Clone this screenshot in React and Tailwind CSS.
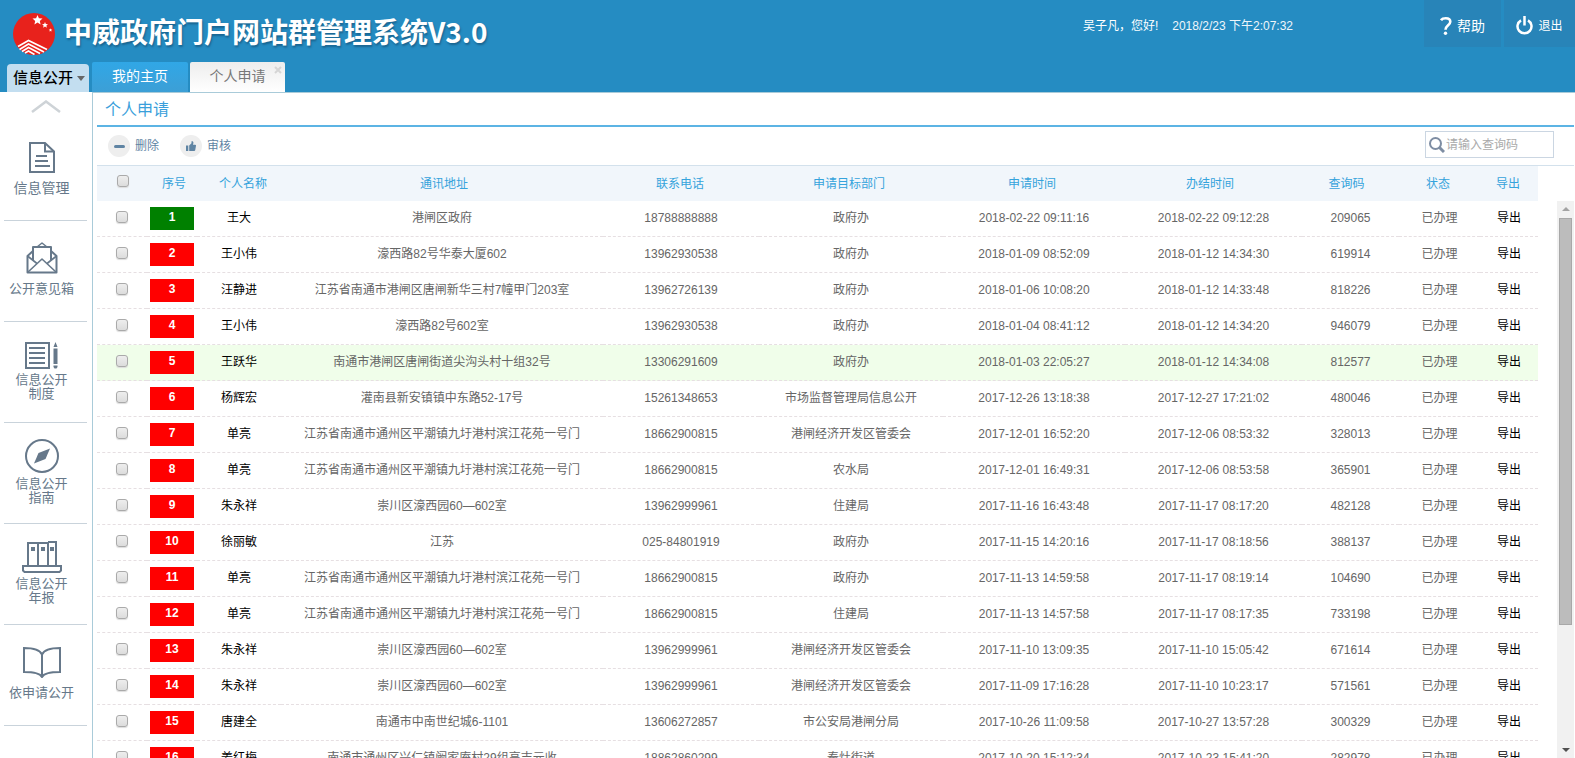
import { useState } from 'react';

const rows = [
  { id: 1, name: '王大', address: '港闸区政府', phone: '18788888888', dept: '政府办', applied: '2018-02-22 09:11:16', finished: '2018-02-22 09:12:28', code: '209065', isNew: true },
  { id: 2, name: '王小伟', address: '濠西路82号华泰大厦602', phone: '13962930538', dept: '政府办', applied: '2018-01-09 08:52:09', finished: '2018-01-12 14:34:30', code: '619914' },
  { id: 3, name: '汪静进', address: '江苏省南通市港闸区唐闸新华三村7幢甲门203室', phone: '13962726139', dept: '政府办', applied: '2018-01-06 10:08:20', finished: '2018-01-12 14:33:48', code: '818226' },
  { id: 4, name: '王小伟', address: '濠西路82号602室', phone: '13962930538', dept: '政府办', applied: '2018-01-04 08:41:12', finished: '2018-01-12 14:34:20', code: '946079' },
  { id: 5, name: '王跃华', address: '南通市港闸区唐闸街道尖沟头村十组32号', phone: '13306291609', dept: '政府办', applied: '2018-01-03 22:05:27', finished: '2018-01-12 14:34:08', code: '812577' },
  { id: 6, name: '杨辉宏', address: '灌南县新安镇镇中东路52-17号', phone: '15261348653', dept: '市场监督管理局信息公开', applied: '2017-12-26 13:18:38', finished: '2017-12-27 17:21:02', code: '480046' },
  { id: 7, name: '单亮', address: '江苏省南通市通州区平潮镇九圩港村滨江花苑一号门', phone: '18662900815', dept: '港闸经济开发区管委会', applied: '2017-12-01 16:52:20', finished: '2017-12-06 08:53:32', code: '328013' },
  { id: 8, name: '单亮', address: '江苏省南通市通州区平潮镇九圩港村滨江花苑一号门', phone: '18662900815', dept: '农水局', applied: '2017-12-01 16:49:31', finished: '2017-12-06 08:53:58', code: '365901' },
  { id: 9, name: '朱永祥', address: '崇川区濠西园60—602室', phone: '13962999961', dept: '住建局', applied: '2017-11-16 16:43:48', finished: '2017-11-17 08:17:20', code: '482128' },
  { id: 10, name: '徐丽敏', address: '江苏', phone: '025-84801919', dept: '政府办', applied: '2017-11-15 14:20:16', finished: '2017-11-17 08:18:56', code: '388137' },
  { id: 11, name: '单亮', address: '江苏省南通市通州区平潮镇九圩港村滨江花苑一号门', phone: '18662900815', dept: '政府办', applied: '2017-11-13 14:59:58', finished: '2017-11-17 08:19:14', code: '104690' },
  { id: 12, name: '单亮', address: '江苏省南通市通州区平潮镇九圩港村滨江花苑一号门', phone: '18662900815', dept: '住建局', applied: '2017-11-13 14:57:58', finished: '2017-11-17 08:17:35', code: '733198' },
  { id: 13, name: '朱永祥', address: '崇川区濠西园60—602室', phone: '13962999961', dept: '港闸经济开发区管委会', applied: '2017-11-10 13:09:35', finished: '2017-11-10 15:05:42', code: '671614' },
  { id: 14, name: '朱永祥', address: '崇川区濠西园60—602室', phone: '13962999961', dept: '港闸经济开发区管委会', applied: '2017-11-09 17:16:28', finished: '2017-11-10 10:23:17', code: '571561' },
  { id: 15, name: '唐建全', address: '南通市中南世纪城6-1101', phone: '13606272857', dept: '市公安局港闸分局', applied: '2017-10-26 11:09:58', finished: '2017-10-27 13:57:28', code: '300329' },
  { id: 16, name: '姜红梅', address: '南通市通州区兴仁镇阚家庵村29组高吉元收', phone: '18862860299', dept: '秦灶街道', applied: '2017-10-20 15:12:34', finished: '2017-10-23 15:41:20', code: '282978' },
];

const headCols = ['w-[52px]', 'w-[50px]', 'w-[88px]', '', 'w-[158px]', 'w-[180px]', 'w-[186px]', 'w-[170px]', 'w-[103px]', 'w-[80px]', 'w-[60px]'];
const bodyCols = ['w-[50px]', 'w-[50px]', 'w-[84px]', '', 'w-[156px]', 'w-[184px]', 'w-[182px]', 'w-[177px]', 'w-[97px]', 'w-[81px]', 'w-[58px]'];
const headings = ['序号', '个人名称', '通讯地址', '联系电话', '申请目标部门', '申请时间', '办结时间', '查询码', '状态', '导出'];

const menu = [
  { lines: ['信息管理'], size: 'text-sm', Icon: DocIcon },
  { lines: ['公开意见箱'], size: 'text-[13px]', Icon: MailIcon },
  { lines: ['信息公开', '制度'], size: 'text-[13px]', Icon: RulesIcon },
  { lines: ['信息公开', '指南'], size: 'text-[13px]', Icon: CompassIcon },
  { lines: ['信息公开', '年报'], size: 'text-[13px]', Icon: BindersIcon },
  { lines: ['依申请公开'], size: 'text-[13px]', Icon: BookIcon },
];

function DocIcon() {
  return (
    <svg width="26" height="31" viewBox="0 0 26 31" fill="none" stroke="currentColor" strokeWidth="2">
      <path d="M1 1h15l9 8.500V30H1z" />
      <path d="M16 1v8.500h9M7 14h11M6 19h13M6 24h15" />
    </svg>
  );
}

function MailIcon() {
  return (
    <svg width="32" height="32" viewBox="0 0 32 32" fill="none" stroke="currentColor" strokeWidth="2" strokeLinejoin="round">
      <path d="M7 9L1.500 14v16.500h29V14L25 9" />
      <path d="M11 5l5-4 5 4" strokeWidth="1.500" />
      <path d="M7 18V5h18v13" />
      <path d="M1.500 14l9.500 7.500M30.500 14L21 21.500M2 30l14-13 14 13" strokeWidth="1.600" />
    </svg>
  );
}

function RulesIcon() {
  return (
    <svg width="33" height="27" viewBox="0 0 33 27" fill="none" stroke="currentColor" strokeWidth="2">
      <path d="M1 1h23v25H1z" />
      <path d="M4 6h16M4 11h16M4 16h16M4 21h16" />
      <path d="M30.500 0l2 5h-4zM28.500 6.500h4V22h-4zM28.500 23.500h4V25l-1 1.500h-2l-1-1.500z" fill="currentColor" stroke="none" />
    </svg>
  );
}

function CompassIcon() {
  return (
    <svg width="34" height="34" viewBox="0 0 34 34" fill="none" stroke="currentColor" strokeWidth="2">
      <circle cx="17" cy="17" r="16" />
      <path d="M25 9.500L20.500 20 9 24.500 13.500 14z" fill="currentColor" stroke="none" />
    </svg>
  );
}

function BindersIcon() {
  return (
    <svg width="40" height="32" viewBox="0 0 40 32" fill="none" stroke="currentColor" strokeWidth="2">
      <path d="M6 25V2h10v23M16 2h10v23M26 1h8v24M1 25h38v4.500L37.500 31h-35L1 29.500z" />
      <path d="M9 6h4v4H9zM19 6h4v4h-4zM28 6h4v4h-4z" fill="currentColor" stroke="none" />
    </svg>
  );
}

function BookIcon() {
  return (
    <svg width="38" height="31" viewBox="0 0 38 31" fill="none" stroke="currentColor" strokeWidth="2">
      <path d="M19 7.500C17 3 10 1 1 1v24c9 0 16 1 18 5 2-4 9-5 18-5V1c-9 0-16 2-18 6.500z" />
      <path d="M19 7v23" />
    </svg>
  );
}

function Logo() {
  const star = 'M0-5l1.400 3.300 3.600.300-2.700 2.400.800 3.500L0 2.600-3.100 4.500l.800-3.500L-5-1.400l3.600-.300z';
  return (
    <svg width="42" height="42" viewBox="0 0 42 42">
      <circle cx="21" cy="21" r="21" fill="#e8221c" />
      <g fill="#fff">
        <path d={star} transform="translate(24.500 7)" />
        <path d={star} transform="translate(32 12) scale(.6)" />
        <path d={star} transform="translate(37.500 17) scale(.35)" />
      </g>
      <g fill="none" stroke="#fff" strokeWidth="1.700">
        <path d="M5 33.500L15.500 27.500l18.500 9" />
        <path d="M6.500 36.500L15.500 31l15.500 8" />
        <path d="M9 38.500L15.500 34.500l11.500 6" />
        <path d="M12 40l3.500-2 6 3.500" />
      </g>
    </svg>
  );
}

function Checkbox({ label, checked, onChange }) {
  return (
    <input
      type="checkbox"
      aria-label={label}
      checked={checked}
      onChange={onChange}
      className="mx-auto block size-3 appearance-none rounded-[3px] border border-[#aaa] bg-linear-to-b from-[#eee] to-[#dcdcdc] shadow-[0_1px_1px_#ddd] checked:bg-sky-500"
    />
  );
}

function Cols({ widths }) {
  return (
    <colgroup>
      {widths.map((width, index) => (
        <col key={index} className={width} />
      ))}
    </colgroup>
  );
}

function Header({ tab, setTab }) {
  return (
    <header className="flex h-[92px] shrink-0 flex-col justify-between bg-[#258cc2] text-white">
      <div className="flex items-start justify-between">
        <div className="flex items-start gap-[9px] pt-[13px] pl-[13px]">
          <Logo />
          <h1 className="font-['Noto_Sans_CJK_SC',sans-serif] text-[28px] leading-9 font-bold whitespace-nowrap [text-shadow:1px_2px_2px_#1a6591]">
            中威政府门户网站群管理系统V3.0
          </h1>
        </div>
        <div className="flex items-start text-xs">
          <p className="flex gap-[14px] pt-[18px] pr-[131px] leading-4">
            <span>吴子凡，您好!</span>
            <span className="text-[#eef6fb]">2018/2/23 下午2:07:32</span>
          </p>
          <button type="button" className="mr-[3px] flex h-[47px] w-[77px] items-center justify-center gap-[5px] bg-[#2884b8] pt-1 text-sm">
            <svg width="12" height="18" viewBox="0 0 12 18" fill="none" stroke="#fff" strokeWidth="2.600">
              <path d="M1 3.200C2 1.800 3.800 1.300 5.800 1.300c2.700 0 4.500 1.300 4.500 3.500 0 3.400-4.800 3.700-4.800 8" />
              <circle cx="5.500" cy="16.200" r="1.700" fill="#fff" stroke="none" />
            </svg>
            帮助
          </button>
          <button type="button" className="flex h-[47px] w-[71px] items-center justify-center gap-[5px] bg-[#2884b8] pt-1 text-xs">
            <svg width="17" height="19" viewBox="0 0 17 19" fill="none" stroke="#fff" strokeWidth="2.500">
              <path d="M5 4.300a7 7 0 1 0 7 0M8.500 0v9.500" />
            </svg>
            退出
          </button>
        </div>
      </div>

      <nav className="flex items-end pl-[7px]">
        <button type="button" className="flex h-7 w-[82px] items-center gap-1 rounded-t-sm bg-[#c3def0] pl-[6px] text-[15px] font-medium text-black">
          信息公开
          <span className="border-x-4 border-t-[5px] border-x-transparent border-t-[#666]" />
        </button>
        <button
          type="button"
          onClick={() => setTab('home')}
          className="ml-[3px] h-[30px] w-24 rounded-t-xs bg-linear-to-b from-[#30a7e6] to-[#3c9fd6] pb-0.5 text-sm"
        >
          我的主页
        </button>
        <div className="relative ml-0.5">
          <button
            type="button"
            aria-current={tab === 'apply' ? 'page' : undefined}
            onClick={() => setTab('apply')}
            className="block h-[30px] w-[95px] rounded-t-xs bg-linear-to-b from-[#ededed] to-white pb-0.5 text-sm text-[#777]"
          >
            个人申请
          </button>
          <button type="button" aria-label="关闭标签" className="absolute top-1 right-[3px] text-[#d5d5d5]">
            <svg width="8" height="8" viewBox="0 0 8 8" stroke="currentColor" strokeWidth="2">
              <path d="M1 1l6 6M7 1L1 7" />
            </svg>
          </button>
        </div>
      </nav>
    </header>
  );
}

function Sidebar() {
  return (
    <aside className="w-[92px] shrink-0 pr-[5px] pl-1 text-[#66788a]">
      <button type="button" aria-label="向上滚动" className="flex h-7 w-full items-start justify-center pt-2 text-[#ced3d7]">
        <svg width="30" height="13" viewBox="0 0 30 13" fill="none" stroke="currentColor" strokeWidth="2.500">
          <path d="M1 12L15 1.500 29 12" />
        </svg>
      </button>
      {menu.map(({ lines, size, Icon }) => (
        <a
          key={lines.join('')}
          href="#"
          className={`flex h-[101px] flex-col items-center justify-center border-b border-[#c9d3db] pr-2 ${lines.length > 1 ? 'gap-1 pb-0.5' : 'gap-2 pb-1'} ${size} leading-[14px]`}
        >
          <Icon />
          <span className="text-center whitespace-nowrap">
            {lines.map((line) => (
              <span key={line} className="block">{line}</span>
            ))}
          </span>
        </a>
      ))}
    </aside>
  );
}

export default function App() {
  const [tab, setTab] = useState('apply');
  const [query, setQuery] = useState('');
  const [selected, setSelected] = useState([]);

  const toggle = (id) => setSelected((ids) => (ids.includes(id) ? ids.filter((item) => item !== id) : [...ids, id]));

  return (
    <div className="flex h-screen flex-col overflow-hidden bg-white font-['Liberation_Sans','Noto_Sans_CJK_SC',sans-serif] text-xs text-[#666]">
      <Header tab={tab} setTab={setTab} />
      <div className="flex min-h-0 flex-1">
        <Sidebar />
        <main className="flex min-w-0 flex-1 flex-col border-t border-l border-[#a9cbd9] pr-px pl-1">
          <h2 className="h-[34px] shrink-0 border-b-2 border-[#5cb4e4] pl-2 text-base leading-[34px] text-[#3a9fdb]">个人申请</h2>

          <div className="flex h-[39px] shrink-0 items-center justify-between border-b border-[#d3e1ec] pr-5 pl-[11px] text-[#5f84a3]">
            <div className="flex gap-[21px]">
              <button type="button" className="flex items-center gap-[5px]">
                <span className="flex size-[22px] items-center justify-center rounded-full bg-[#eee]">
                  <span className="h-[3px] w-[11px] rounded-xs bg-[#5f84a3]" />
                </span>
                删除
              </button>
              <button type="button" className="flex items-center gap-[5px]">
                <span className="flex size-[22px] items-center justify-center rounded-full bg-[#eee]">
                  <svg width="10" height="10" viewBox="0 0 10 10" fill="currentColor">
                    <path d="M0 4.500h2.300V10H0zM3.200 4.500L5.500 2.300V.300C6.800-.200 7.600.800 7.400 2L7 3.700h2.200c.600 0 .900.500.800 1L9.200 9.200c-.100.500-.500.800-1 .800H3.200z" />
                  </svg>
                </span>
                审核
              </button>
            </div>
            <label className="mb-[3px] flex h-[27px] w-[129px] items-center gap-px border border-[#cbd6e2] pl-[3px]">
              <svg width="16" height="16" viewBox="0 0 16 16" fill="none" stroke="#7e8da3" aria-hidden="true">
                <circle cx="6.500" cy="6.500" r="5.500" strokeWidth="2" />
                <path d="M10.500 10.500L15 15" strokeWidth="3" />
              </svg>
              <input
                type="text"
                aria-label="查询码"
                value={query}
                onChange={(event) => setQuery(event.target.value)}
                placeholder="请输入查询码"
                className="min-w-0 flex-1 text-xs outline-none placeholder:text-[#aaa]"
              />
            </label>
          </div>

          <div className="shrink-0 pr-9">
            <table className="w-full table-fixed bg-[#f1f6fb] text-center text-[#35a3dc]">
              <Cols widths={headCols} />
              <thead>
                <tr className="h-[35px]">
                  <th className="pb-1.5">
                    <Checkbox
                      label="全选"
                      checked={selected.length === rows.length}
                      onChange={(event) => setSelected(event.target.checked ? rows.map((row) => row.id) : [])}
                    />
                  </th>
                  {headings.map((heading) => (
                    <th key={heading} className="font-normal">{heading}</th>
                  ))}
                </tr>
              </thead>
            </table>
          </div>

          <div className="flex min-h-0 flex-1">
            <div className="min-w-0 flex-1 overflow-hidden pr-[19px]">
              <table className="w-full table-fixed border-separate border-spacing-0 text-center whitespace-nowrap">
                <Cols widths={bodyCols} />
                <tbody>
                  {rows.map((row) => (
                    <tr
                      key={row.id}
                      className={`h-9 [&>td]:border-b [&>td]:border-dashed [&>td]:border-[#e6dfe2] ${row.id === 5 ? 'bg-[#f0feea]' : ''}`}
                    >
                      <td className="pb-1">
                        <Checkbox label={`选择 ${row.name}`} checked={selected.includes(row.id)} onChange={() => toggle(row.id)} />
                      </td>
                      <td>
                        <span className={`mx-auto block h-[23px] w-11 leading-5 font-bold text-white ${row.isNew ? 'bg-[#008000]' : 'bg-[#ff0000]'}`}>{row.id}</span>
                      </td>
                      <td className="pb-0.5"><a href="#" className="text-black">{row.name}</a></td>
                      <td className="pb-0.5">{row.address}</td>
                      <td className="pb-0.5">{row.phone}</td>
                      <td className="pb-0.5">{row.dept}</td>
                      <td className="pb-0.5">{row.applied}</td>
                      <td className="pb-0.5">{row.finished}</td>
                      <td className="pb-0.5">{row.code}</td>
                      <td className="pb-0.5">已办理</td>
                      <td className="pb-0.5"><a href="#" className="text-black">导出</a></td>
                    </tr>
                  ))}
                </tbody>
              </table>
            </div>
            <div aria-hidden="true" className="flex w-[17px] shrink-0 flex-col items-center justify-between bg-[#f1f1f1] py-[6px]">
              <span className="border-x-4 border-b-4 border-x-transparent border-b-[#a3a3a3]" />
              <div className="w-full flex-1 px-0.5 pt-[7px] pb-2">
                <div className="h-[78%] border border-[#a8a8a8] bg-[#bcbcbc]" />
              </div>
              <span className="border-x-4 border-t-4 border-x-transparent border-t-[#505050]" />
            </div>
          </div>
        </main>
      </div>
    </div>
  );
}
